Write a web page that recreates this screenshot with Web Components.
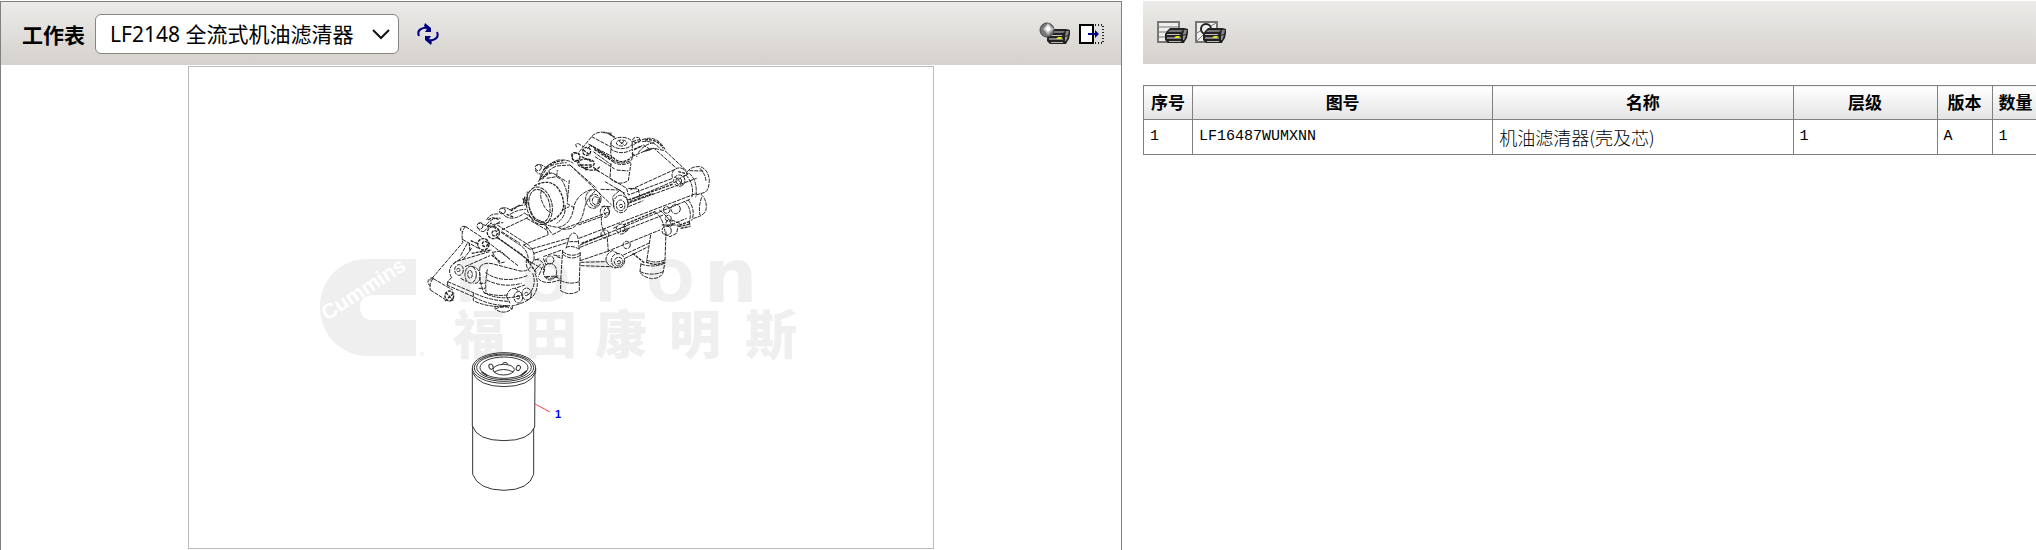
<!DOCTYPE html>
<html lang="zh-CN">
<head>
<meta charset="utf-8">
<title>工作表</title>
<style>
  body {
    margin: 0;
    background: #fff;
    color: #000;
    font-family: "Noto Sans", "Noto Sans CJK SC", sans-serif;
  }
</style>
</head>
<body>

<parts-viewer>
  <tool-bar slot="sheet-bar">
    <sheet-select label="工作表">
      <option>LF2148 全流式机油滤清器</option>
    </sheet-select>
    <icon-button icon="refresh" label="刷新"></icon-button>
    <icon-button slot="end" icon="print-view" label="打印预览"></icon-button>
    <icon-button slot="end" icon="exit" label="隐藏"></icon-button>
  </tool-bar>
  <part-drawing slot="sheet"></part-drawing>

  <tool-bar slot="list-bar">
    <icon-button icon="print-list" label="打印列表"></icon-button>
    <icon-button icon="print-picture" label="打印图片"></icon-button>
  </tool-bar>
  <parts-table slot="list"></parts-table>
</parts-viewer>

<script>
(function ( doc ) {

  function makeTemplate ( html ) {
    const template = doc.createElement('template');
    template.innerHTML = html;
    return template;
  }

  function attach ( el, template ) {
    const root = el.attachShadow({ mode: 'open' });
    root.appendChild(template.content.cloneNode(true));
    return root;
  }

  /**
   * Two panes side by side: the sheet and the parts list
   */
  const viewerTemplate = makeTemplate(`
    <style>
      :host {
        display: grid;
        grid-template-columns: 1122fr 893fr;
        column-gap: 21px;
        box-sizing: border-box;
        height: 100vh;
        padding-top: 1px;
        overflow: hidden;
      }
      .sheet {
        min-width: 0;
        border: solid #808080;
        border-width: 1px 1px 0;
      }
      .list { min-width: 0; }
      .sheet-body {
        display: flex;
        justify-content: center;
        padding-top: 1px;
      }
      .list-body { padding-top: 21px; }
    </style>
    <section class="sheet">
      <slot name="sheet-bar"></slot>
      <div class="sheet-body"><slot name="sheet"></slot></div>
    </section>
    <section class="list">
      <slot name="list-bar"></slot>
      <div class="list-body"><slot name="list"></slot></div>
    </section>
  `);

  class PartsViewer extends HTMLElement {
    constructor () {
      super();
      attach(this, viewerTemplate);
    }
  }

  /**
   * Toolbar, with a start group and an end group
   */
  const barTemplate = makeTemplate(`
    <style>
      :host {
        display: flex;
        align-items: center;
        justify-content: space-between;
        box-sizing: border-box;
        height: 63px;
        padding: 0 16px 0 14px;
        background: linear-gradient(#ecebe9, #d5d1cc);
      }
      .group {
        display: flex;
        align-items: center;
        gap: 6px;
      }
    </style>
    <div class="group"><slot></slot></div>
    <div class="group"><slot name="end"></slot></div>
  `);

  class ToolBar extends HTMLElement {
    constructor () {
      super();
      attach(this, barTemplate);
    }
  }

  /**
   * Labelled drop-down. The options come from the light DOM,
   * and are moved because a select can not hold a slot.
   */
  const selectTemplate = makeTemplate(`
    <style>
      :host {
        display: flex;
        align-items: center;
        gap: 10px;
        margin: 0 12px 0 7px;
        font-size: 21px;
      }
      label { font-weight: bold; }
      .box {
        display: grid;
        align-items: center;
      }
      select, svg { grid-area: 1 / 1; }
      select {
        appearance: none;
        width: 304px;
        height: 40px;
        padding: 0 36px 0 14px;
        border: 1px solid #858585;
        border-radius: 6px;
        background: #fff;
        color: #000;
        font: inherit;
      }
      svg {
        justify-self: end;
        margin-right: 8px;
        pointer-events: none;
      }
    </style>
    <label for="sheet"></label>
    <div class="box">
      <select id="sheet"></select>
      <svg width="20" height="14" viewBox="0 0 20 14" aria-hidden="true">
        <path d="M2 3 L10 11 L18 3" fill="none" stroke="#111" stroke-width="2"/>
      </svg>
    </div>
  `);

  class SheetSelect extends HTMLElement {
    constructor () {
      super();
      this._root = attach(this, selectTemplate);
    }

    connectedCallback () {
      const select = this._root.querySelector('select');
      this._root.querySelector('label').textContent = this.getAttribute('label');
      this.querySelectorAll('option').forEach(option => select.appendChild(option));
    }
  }

  /**
   * Toolbar icons
   */
  const printer = `
    <path d="M10 10 L13 7 H27 L31 8 V12 L30 17 L28 20 L27 22 H11 L8 19 V13 Z" fill="#222"/>
    <path d="M13 9 H26 L24 11 H11 Z" fill="#777"/>
    <path d="M27 9 L30 9 L29 13 L26 14 Z" fill="#888"/>
    <path d="M10 13 H22 L24 14 H10 Z" fill="#c4c4c4"/>
    <path d="M10 16 H24 V18 H10 Z" fill="#808080"/>
    <path d="M26 15 L29 14 L27 19 H26 Z" fill="#999"/>
    <path d="M12 20 H24 V21 H12 Z" fill="#b8b8b8"/>
    <path d="M17 17 L19 15 H23 L22 17 Z" fill="#e6e61a"/>
  `;

  const icons = {
    'refresh': `
      <svg width="22" height="24" viewBox="0 0 22 24">
        <g fill="none" stroke="#000080" stroke-width="2">
          <path d="M2 14 Q0 9 4 7 Q7 5 10 6"/>
          <path d="M20 10 Q22 15 18 17 Q15 19 12 18"/>
        </g>
        <g fill="#000080">
          <path d="M8 1 L14 6 V10 H8 L10 7 L7 4 Z"/>
          <path d="M14 23 L8 18 V14 H14 L12 17 L15 20 Z"/>
        </g>
      </svg>`,
    'print-view': `
      <svg width="32" height="24" viewBox="0 0 32 24">
        ${ printer }
        <circle cx="8" cy="8" r="7" fill="#777" stroke="#444"/>
        <path d="M9 1 L15 7 L9 13 L4 7 Z" fill="#bbb"/>
        <path d="M9 3 L12 7 L9 10 L6 7 Z" fill="#fff"/>
      </svg>`,
    'exit': `
      <svg width="28" height="24" viewBox="-2 0 28 24">
        <rect x="1" y="3" width="13" height="18" fill="#fff" stroke="#000" stroke-width="2"/>
        <path d="M16 3 H24 V21 H15" fill="none" stroke="#222" stroke-width="2" stroke-dasharray="1 2"/>
        <path d="M9 12 H18" stroke="#000080" stroke-width="2"/>
        <path d="M16 8 L20 12 L16 16 Z" fill="#000080"/>
      </svg>`,
    'print-list': `
      <svg width="32" height="24" viewBox="0 0 32 24">
        <path d="M1 1 H22 V21 H1 Z" fill="#eee" stroke="#777" stroke-width="2"/>
        <path d="M1 6 H22 M1 11 H22 M1 16 H22" stroke="#777"/>
        ${ printer }
      </svg>`,
    'print-picture': `
      <svg width="32" height="24" viewBox="0 0 32 24">
        <path d="M1 1 H22 V21 H1 Z" fill="#eee" stroke="#777" stroke-width="2"/>
        <path d="M2 12 L7 9 M2 20 L9 13 M16 5 L21 2" stroke="#777"/>
        <circle cx="11" cy="8" r="5" fill="#eee" stroke="#222" stroke-width="2"/>
        ${ printer }
      </svg>`
  };

  const buttonTemplate = makeTemplate(`
    <style>
      :host { display: block; }
      button {
        display: block;
        padding: 0;
        border: 0;
        background: none;
        cursor: pointer;
      }
      svg { display: block; }
    </style>
    <button type="button"></button>
  `);

  class IconButton extends HTMLElement {
    constructor () {
      super();
      this._root = attach(this, buttonTemplate);
    }

    connectedCallback () {
      const btn = this._root.querySelector('button');
      btn.setAttribute('aria-label', this.getAttribute('label'));
      btn.innerHTML = icons[this.getAttribute('icon')];
    }
  }

  /**
   * Parts list
   */
  const columns = ['序号', '图号', '名称', '层级', '版本', '数量'];
  const rows = [
    ['1', 'LF16487WUMXNN', '机油滤清器(壳及芯)', '1', 'A', '1']
  ];

  const tableTemplate = makeTemplate(`
    <style>
      :host { display: block; }
      table {
        width: 100%;
        table-layout: fixed;
        border-collapse: collapse;
        border: 1px solid #808080;
        border-right: 0;
      }
      th, td {
        box-sizing: border-box;
        height: 34px;
        padding: 0 6px;
        border-left: 1px solid #808080;
        border-bottom: 1px solid #808080;
        line-height: 24px;
        white-space: nowrap;
      }
      th {
        background: linear-gradient(#fff, #e4e4e4);
        font-size: 17px;
      }
      td {
        height: 35px;
        font: 15px/24px "Liberation Mono", "Noto Sans CJK SC", monospace;
        text-align: left;
      }
      td:nth-child(3) {
        font-family: "Noto Sans CJK SC", sans-serif;
        font-size: 18px;
        font-weight: 300;
      }
      .number { width: 49px; }
      .level { width: 144px; }
      .version { width: 55px; }
      .amount { width: 44px; }
    </style>
    <table>
      <colgroup>
        <col class="number"><col><col><col class="level"><col class="version"><col class="amount">
      </colgroup>
      <thead><tr>${ columns.map(c => `<th scope="col">${ c }</th>`).join('') }</tr></thead>
      <tbody>
        ${ rows.map(r => `<tr>${ r.map(c => `<td>${ c }</td>`).join('') }</tr>`).join('') }
      </tbody>
    </table>
  `);

  class PartsTable extends HTMLElement {
    constructor () {
      super();
      attach(this, tableTemplate);
    }
  }

  /**
   * Exploded drawing. The module and the filter are
   * drawn at three times their size and scaled down.
   */
  const drawingTemplate = makeTemplate(`
    <style>
      :host {
        display: block;
        max-width: 100%;
        border: 1px solid #bbb;
      }
      svg { display: block; max-width: 100%; }
      .mark { fill: #efefef; }
      .mark text {
        font-family: "DejaVu Sans", "Noto Sans CJK SC", sans-serif;
        font-weight: bold;
      }
      .mark .cjk {
        font-family: "Noto Sans CJK SC", sans-serif;
        font-weight: 900;
      }
      .mark .brand {
        fill: #fff;
        font-family: "Liberation Sans", sans-serif;
      }
      .module {
        fill: none;
        stroke: #222;
        stroke-width: 3;
        stroke-dasharray: 12 3;
      }
      .dark { stroke-width: 4; stroke-dasharray: 9 3; }
      .filter {
        fill: none;
        stroke: #333;
        stroke-width: 3;
      }
      .callout {
        fill: #00f;
        font: bold 11px "Liberation Sans", sans-serif;
      }
    </style>
    <svg width="744" height="481" viewBox="189 67 744 481" role="img">
      <g class="mark">
        <path d="M416 259 H368 C338 259 320 282 320 307 C320 334 340 356 368 356 H416 V320 H372 C364 320 360 314 360 307 C360 300 365 295 373 295 H416 Z"/>
        <text class="brand" font-size="21" transform="translate(327 321) rotate(-33)">Cummins</text>
        <text x="419" y="356" font-size="6">®</text>
        <text y="302" font-size="57" x="455 522 586 646">FOTO<tspan x="704" font-size="75">n</tspan></text>
        <text class="cjk" y="354" font-size="52" x="453 525 595 669 745">福田康明斯</text>
      </g>

      <g class="module" transform="translate(410 110) scale(.3333)">
        <!-- lower left bracket -->
        <path d="M167 350 L158 349 Q150 353 152 362 L158 367 M167 350 L217 383 M157 388 L205 415 M167 350 Q153 362 157 388 L158 398 L60 512 M172 400 L150 440 M185 415 L160 448"/>
        <path d="M72 505 L62 504 Q52 510 54 521 L62 528 M70 506 L128 540 M61 540 L105 568 M70 506 Q56 520 61 540"/>
        <path d="M125 503 Q108 475 138 455 L238 425 M130 462 L160 440 M165 470 L240 437 M113 515 L190 548 Q240 573 300 574 M110 525 L190 560 Q240 588 300 587 M125 503 L113 515 V525 M190 548 V572 Q240 596 300 587 M152 505 L170 515"/>
        <ellipse cx="147" cy="480" rx="13" ry="16"/><circle cx="145" cy="480" r="5"/>
        <ellipse cx="182" cy="494" rx="17" ry="25"/><ellipse cx="180" cy="493" rx="7" ry="12"/>
        <path d="M185 469 Q212 475 210 500 Q210 520 190 521"/>
        <g class="dark">
          <ellipse cx="118" cy="558" rx="13" ry="15"/><path d="M105 573 L133 548 M108 548 L130 572"/>
          <circle cx="220" cy="403" r="17"/><circle cx="225" cy="402" r="8"/>
          <circle cx="250" cy="368" r="18"/><circle cx="254" cy="370" r="8"/>
          <path d="M182 392 L205 402 M178 400 L180 425 M185 430 L245 420"/>
        </g>
        <!-- dome -->
        <path d="M210 470 Q225 455 250 462 L330 483 Q355 485 362 470 M210 470 Q205 510 222 548 Q270 575 340 555 M226 488 Q280 524 352 497 M232 478 Q225 520 228 545 M222 548 Q260 560 292 555 M230 510 Q280 535 335 520 M208 520 L226 520 M206 535 L226 535"/>
        <path d="M375 490 Q392 530 368 560 Q345 580 305 588 M368 490 Q382 525 355 555 M290 560 Q295 535 315 535 L345 525 M290 560 L300 580 M315 535 L330 545"/>
        <ellipse cx="325" cy="562" rx="13" ry="17"/><ellipse cx="350" cy="552" rx="14" ry="18"/>
        <circle cx="324" cy="562" r="5"/><circle cx="349" cy="552" r="5"/>
        <path d="M255 588 V596 Q280 617 307 596 V588 M257 597 Q280 582 307 597 M270 592 L292 590"/>
        <!-- ribs and side plate -->
        <path d="M232 395 L325 468 M262 382 L350 447 M247 427 L272 423 L300 448 M247 427 L268 460 L284 456"/>
        <path d="M248 350 L325 402 Q358 420 355 460 M262 345 L345 398 Q376 415 372 450 M350 447 Q345 470 360 485 M275 365 L330 400"/>
        <path class="dark" d="M262 383 L330 430 L365 460 M245 435 L270 455 M352 450 L380 490"/>
        <path d="M275 360 L355 322 M340 405 L415 374 M270 335 L248 350 M345 310 Q380 335 408 347 L428 374 M408 347 L415 374 M350 325 L410 360"/>
        <!-- left fittings -->
        <path d="M205 340 Q215 335 222 345 L240 350 M203 352 Q208 365 222 365 M230 330 Q240 310 265 312 M228 345 Q250 320 272 325 M222 365 Q240 340 280 338 M275 295 Q290 290 300 300 M272 305 L285 318 M300 300 Q325 285 345 285 M300 313 Q325 298 348 298 M285 318 Q310 335 345 308"/>
        <circle cx="210" cy="348" r="9"/><circle cx="277" cy="303" r="9"/>
        <g class="dark"><path d="M235 330 Q250 318 268 330 M290 313 L312 322 M302 303 L330 285 M338 265 L352 285 M232 350 L245 338"/></g>
        <!-- inlet ring -->
        <g transform="rotate(-12 400 285)">
          <ellipse cx="388" cy="285" rx="38" ry="57"/>
          <ellipse cx="388" cy="285" rx="31" ry="50"/>
        </g>
        <path class="dark" d="M372 228 Q415 205 440 230 Q465 260 460 295 Q450 325 410 338"/>
        <path d="M352 262 Q340 275 350 290 M395 240 Q385 265 410 300 L425 310 M352 245 Q348 280 370 318 Q385 336 410 338 M388 330 Q410 350 445 352 Q480 345 490 300 Q495 255 545 238"/>
        <path d="M445 352 Q455 362 485 355 Q515 340 522 300 Q530 262 560 240 M470 280 L495 295 M465 285 Q470 320 440 340 M458 300 L478 290"/>
        <path d="M390 205 Q400 165 445 150 Q475 148 490 160 M385 215 L410 175 Q430 160 470 158 M398 208 Q410 180 440 168 L480 165 M410 205 L440 200 L455 210 Q475 240 472 280 M430 190 L470 215 M440 200 L442 180 M478 210 L473 265 M480 165 L560 235 M428 190 Q420 185 400 205"/>
        <path d="M376 170 Q382 160 395 165 L412 175 M376 180 Q382 195 400 192"/><circle cx="385" cy="173" r="9"/>
        <path class="dark" d="M388 210 L420 185 M400 180 Q425 155 460 152 M345 260 L340 280"/>
        <!-- thermostat housing -->
        <path d="M508 125 L545 80 Q560 62 590 68 L615 82 M545 80 L605 112 M535 102 L607 140 M550 125 L605 165 M555 140 L614 177 M540 108 L530 118 M605 70 L580 68 M567 122 L600 145"/>
        <path class="dark" d="M540 105 L605 146 M553 118 L610 155 M598 72 L614 82"/>
        <path d="M500 112 L497 104 Q503 97 510 104 L520 110 M487 140 Q480 130 492 127 L510 135 M487 140 Q485 155 500 155"/>
        <g class="dark">
          <circle cx="530" cy="124" r="12"/><circle cx="498" cy="140" r="12"/><ellipse cx="528" cy="160" rx="25" ry="13"/>
          <path d="M505 150 Q510 175 540 180 Q565 182 570 168 M515 140 L545 155 M512 165 L545 165 M520 120 L540 135 M524 174 L530 183 M550 172 L568 185"/>
        </g>
        <ellipse cx="635" cy="99" rx="32" ry="17"/><ellipse cx="635" cy="99" rx="16" ry="9"/>
        <path d="M628 94 L642 104 M642 94 L630 104 M603 99 V118 Q635 138 667 118 V99 M603 118 Q600 135 608 150 Q635 168 665 150 Q670 130 667 118 M608 155 Q635 172 665 155 M603 160 L600 205 Q625 230 655 212 L663 160 M620 180 L655 183"/>
        <path class="dark" d="M608 142 Q635 168 664 142"/>
        <!-- cooler cover -->
        <path d="M667 95 L690 88 M672 120 L700 105 L720 118 M670 105 Q700 82 725 85 Q750 90 765 118 M685 128 Q705 100 735 98 M697 95 Q730 90 752 118 M665 140 L700 125 Q725 110 745 118 L765 122 L832 185 M700 125 L732 115 L800 175 M665 130 L682 140"/>
        <ellipse cx="680" cy="90" rx="12" ry="8"/>
        <g class="dark"><path d="M672 118 L695 108 M705 90 Q740 85 760 115 M706 122 L720 120 M805 185 L832 192"/></g>
        <path d="M832 190 Q815 165 795 178 Q782 188 788 205 L655 255 M795 178 L660 240 M788 215 L660 270 M655 235 L685 237 L690 262 M585 215 L645 250 M560 180 L650 235 L655 255 M480 165 L605 285"/>
        <path class="dark" d="M655 270 L790 222 M820 200 L835 190"/>
        <circle cx="808" cy="212" r="17"/><circle cx="806" cy="213" r="9"/><path d="M795 200 L820 225 M793 218 L820 198"/>
        <!-- tube ends -->
        <path d="M832 185 Q845 168 872 170 Q895 180 898 210 Q897 240 885 247 L858 255 M838 190 Q865 215 857 262 M828 195 Q855 225 845 265 M870 175 Q888 195 888 215 M838 182 L880 183 M872 252 Q893 270 888 300 Q882 318 850 325 M835 270 Q858 300 845 332 M825 275 Q848 300 838 335 M875 262 Q865 290 870 315"/>
        <path class="dark" d="M808 345 L838 335 M806 350 L840 342 M812 355 L838 350 M838 335 L840 350"/>
        <!-- tubes -->
        <path d="M455 358 L600 305 M655 280 L860 205 M655 290 L700 272 M505 345 L575 320 M428 374 L455 360 M340 405 L360 418 L475 385 M507 385 L860 250 M510 405 L840 268 M510 412 L760 315 M372 430 L470 398 M510 452 L590 425 M590 425 L750 360 M640 435 L720 398 M645 445 L715 410 M512 457 L590 455 M512 467 L600 470 M770 350 L830 325 M735 305 Q760 325 765 365 M748 300 Q775 320 785 345 M575 320 Q570 350 590 380 M592 385 L595 425"/>
        <path class="dark" d="M660 275 L730 250 M515 400 L580 375 M640 345 L735 305 M668 430 L705 460"/>
        <!-- bosses -->
        <ellipse cx="550" cy="267" rx="23" ry="28"/><ellipse cx="554" cy="271" rx="15" ry="18"/><ellipse cx="556" cy="272" rx="9" ry="12"/>
        <ellipse cx="632" cy="282" rx="22" ry="26"/><ellipse cx="632" cy="286" rx="13" ry="16"/><circle cx="633" cy="288" r="5"/>
        <path d="M612 290 L608 260 L630 240 M655 285 Q655 255 620 235 M572 238 L625 240 M575 290 L605 290"/>
        <ellipse cx="585" cy="305" rx="14" ry="17"/><ellipse cx="590" cy="305" rx="8" ry="11"/>
        <ellipse cx="624" cy="452" rx="20" ry="21"/><circle cx="626" cy="455" r="13"/><circle cx="627" cy="457" r="5"/>
        <path d="M624 431 L608 422 Q588 430 588 450 Q592 470 618 474"/>
        <circle cx="634" cy="357" r="15"/><circle cx="638" cy="358" r="7"/><circle cx="585" cy="372" r="12"/>
        <circle cx="650" cy="405" r="11"/><circle cx="770" cy="362" r="14"/><circle cx="778" cy="340" r="10"/>
        <circle cx="797" cy="297" r="14"/><circle cx="770" cy="300" r="10"/><circle cx="775" cy="325" r="9"/>
        <path d="M755 345 L805 345 L800 370 L780 380 L760 370 M785 330 L810 340 M610 355 L620 350 M650 365 L658 350"/>
        <!-- drain fittings -->
        <path d="M474 395 Q478 370 492 369 Q504 372 505 392 L508 418 M474 395 L468 415 M478 395 L503 395 M458 420 L452 515 V542 Q480 560 508 542 V515 L511 425 M468 412 Q488 405 508 418 M458 425 Q485 445 511 428 M458 433 Q485 453 511 436 M452 512 Q480 525 508 515"/>
        <path d="M722 375 L710 455 M768 365 L765 455 M710 450 Q735 462 765 450 M693 460 L690 485 Q695 500 725 506 Q755 505 760 485 L765 455 M693 462 Q730 475 763 460 M690 485 Q725 500 760 485"/>
        <path class="dark" d="M708 456 Q738 470 763 456"/>
        <!-- plugs between dome and drain -->
        <ellipse cx="420" cy="485" rx="20" ry="25"/><ellipse cx="420" cy="450" rx="12" ry="12"/>
        <path d="M365 460 Q375 440 395 455 Q410 475 400 490 M385 505 Q395 520 425 517 L450 510 M400 440 L455 420 M398 470 L385 500 M435 500 L455 508 M405 500 Q420 510 440 500 M440 440 L455 445 M375 450 L390 445"/>
        <path d="M365 458 L395 475 M400 445 L408 465 M408 500 L445 498 M430 435 L450 438 M375 480 L392 462"/>
      </g>

      <g class="filter" transform="translate(440 331) scale(.3333)">
        <ellipse cx="192" cy="111" rx="95" ry="46"/>
        <ellipse cx="192" cy="110" rx="89" ry="41"/>
        <ellipse cx="192" cy="109" rx="82" ry="37"/>
        <ellipse cx="192" cy="110" rx="72" ry="32"/>
        <ellipse cx="191" cy="116" rx="32" ry="16"/>
        <path d="M162 123 Q191 108 220 123"/>
        <ellipse cx="153" cy="107" rx="6" ry="8" transform="rotate(-25 153 107)"/>
        <ellipse cx="235" cy="111" rx="6" ry="8" transform="rotate(25 235 111)"/>
        <path d="M187 101 Q188 94 195 94 Q203 94 203 101"/>
        <path d="M97 111 V124 Q115 166 192 167 Q270 166 287 124 V111"/>
        <path d="M97 124 V285 Q112 329 192 329 Q268 329 284 288 L285 124 M98 285 V430 Q115 477 192 478 Q268 477 281 430 V292"/>
        <path d="M125 123 L142 134 M260 120 L243 133" stroke-width="5"/>
      </g>
      <path d="M535 404 L550 412" stroke="#f44"/>
      <text class="callout" x="555" y="418">1</text>
    </svg>
  `);

  class PartDrawing extends HTMLElement {
    constructor () {
      super();
      attach(this, drawingTemplate);
    }
  }

  customElements.define('icon-button', IconButton);
  customElements.define('sheet-select', SheetSelect);
  customElements.define('tool-bar', ToolBar);
  customElements.define('parts-table', PartsTable);
  customElements.define('part-drawing', PartDrawing);
  customElements.define('parts-viewer', PartsViewer);
})( document );
</script>
</body>
</html>
